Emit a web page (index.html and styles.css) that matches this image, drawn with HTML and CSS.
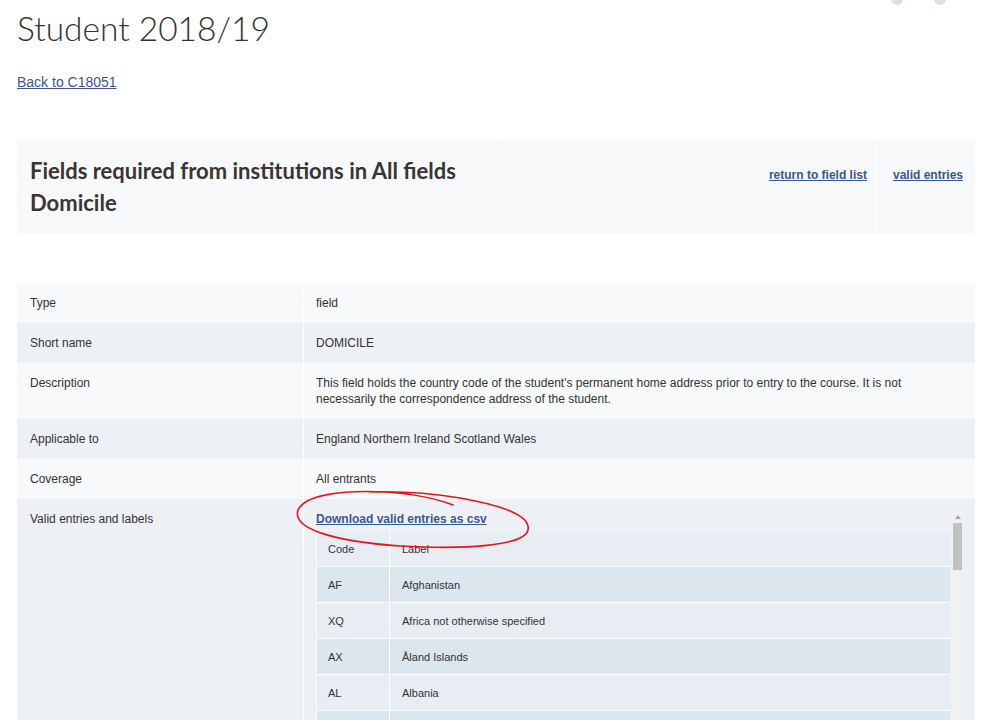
FILE: index.html
```html
<!DOCTYPE html>
<html lang="en">
<head>
<meta charset="utf-8">
<title>Student 2018/19 - Domicile</title>
<link rel="stylesheet" href="styles.css">
</head>
<body>
<div class="dots"><span class="dot"></span><span class="dot"></span></div>
<main class="page">
  <h1 class="title">Student 2018/19</h1>
  <p class="back"><a href="#">Back to C18051</a></p>

  <div class="head-box">
    <div class="head-main">
      <h2>Fields required from institutions in All fields<br>Domicile</h2>
    </div>
    <div class="head-link head-link-right"><a href="#">return to field list</a></div>
    <div class="head-link"><a href="#">valid entries</a></div>
  </div>

  <div class="details">
    <div class="row odd"><div class="k">Type</div><div class="v">field</div></div>
    <div class="row even"><div class="k">Short name</div><div class="v">DOMICILE</div></div>
    <div class="row odd"><div class="k">Description</div><div class="v">This field holds the country code of the student's permanent home address prior to entry to the course. It is not necessarily the correspondence address of the student.</div></div>
    <div class="row even"><div class="k">Applicable to</div><div class="v">England Northern Ireland Scotland Wales</div></div>
    <div class="row odd"><div class="k">Coverage</div><div class="v">All entrants</div></div>
    <div class="row even last"><div class="k">Valid entries and labels</div>
      <div class="v vscroll">
        <div class="scroll-content">
          <a class="csv" href="#">Download valid entries as csv</a>
          <div class="codes">
            <div class="crow hdr"><div class="c1">Code</div><div class="c2">Label</div></div>
            <div class="crow b"><div class="c1">AF</div><div class="c2">Afghanistan</div></div>
            <div class="crow a"><div class="c1">XQ</div><div class="c2">Africa not otherwise specified</div></div>
            <div class="crow b"><div class="c1">AX</div><div class="c2">Åland Islands</div></div>
            <div class="crow a"><div class="c1">AL</div><div class="c2">Albania</div></div>
            <div class="crow b"><div class="c1"></div><div class="c2"></div></div>
          </div>
        </div>
        <div class="sbar"><div class="sarrow"></div><div class="sthumb"></div></div>
      </div>
    </div>
  </div>
</main>
<svg class="scribble" width="998" height="720" viewBox="0 0 998 720">
  <path d="M 453 505 C 435 498, 415 494, 385 492 C 340 490, 305 495, 298 510 C 292 528, 330 541, 400 546 C 470 550, 525 545, 528 530 C 531 515, 500 505, 460 498 C 430 493, 400 491, 370 492" fill="none" stroke="#e4161d" stroke-width="1.6" stroke-linecap="round"/>
</svg>
</body>
</html>
```

FILE: styles.css
```css
html, body { margin: 0; padding: 0; background: #fff; }
body {
  font-family: "Liberation Sans", Arial, sans-serif;
  color: #333;
  height: 720px;
  overflow: hidden;
  position: relative;
}
a { color: #3a5795; }

.dots { position: absolute; top: -7px; left: 891px; display: flex; gap: 31px; }
.dot { width: 12px; height: 12px; border-radius: 50%; background: #e3dfdd; display: block; }

.page { padding: 0 23px 0 17px; }

.title {
  font-family: Lato, "Open Sans", sans-serif;
  font-weight: 300;
  font-size: 33.5px;
  line-height: 44px;
  color: #333;
  margin: 6px 0 0 0;
}

.back { margin: 23px 0 0 0; font-size: 14px; line-height: 18px; }

.head-box {
  margin-top: 49px;
  display: flex;
  background: #f8f9fb;
  height: 94px;
}
.head-main { width: 481px; padding: 15px 13px; box-sizing: border-box; border-right: 1px solid #f2f4f7; }
.head-main h2 {
  margin: 0;
  font-family: Lato, "Open Sans", sans-serif;
  font-weight: 700;
  font-size: 22px;
  line-height: 32px;
  color: #3a3434;
}
.head-link {
  padding: 27px 12px 0 13px;
  font-size: 12px;
  line-height: 16px;
  font-weight: bold;
}
.head-link-right { flex: 1; text-align: right; border-right: 1px solid #f2f4f7; }

.details { margin-top: 49px; font-size: 12px; line-height: 16px; }
.row { display: flex; }
.row.odd { background: #f8f9fb; }
.row.even { background: #edf1f5; }
.k { width: 287px; padding: 12px 13px; box-sizing: border-box; border-right: 1px solid #fff; flex: none; }
.v { flex: 1; padding: 12px 12px 12px 12px; }
.row.last { height: 240px; }

.vscroll { display: flex; padding-bottom: 0; padding-right: 12px; overflow: hidden; }
.scroll-content { flex: 1; min-width: 0; }
.csv { font-weight: bold; display: block; line-height: 16px; }
.codes { margin-top: 3px; margin-right: 2px; font-size: 11px; border-left: 1px solid #fff; }
.crow { display: flex; height: 35px; border-top: 1px solid #fff; align-items: center; }
.crow.hdr { border-top: 1px solid #f3f5f8; }
.crow.a, .crow.hdr { background: #e8edf4; }
.crow.b { background: #dce6ef; }
.c1 { width: 73px; padding-left: 11px; box-sizing: border-box; border-right: 1px solid #fff; height: 100%; display: flex; align-items: center; }
.c2 { flex: 1; padding-left: 12px; }

.sbar { width: 11px; background: #f1f1f1; flex: none; display: flex; flex-direction: column; align-items: center; }
.sarrow { width: 0; height: 0; border-left: 3px solid transparent; border-right: 3px solid transparent; border-bottom: 4px solid #a3a3a3; margin-top: 4px; }
.sthumb { width: 9px; height: 47px; background: #c1c1c1; margin-top: 4px; }

.scribble { position: absolute; left: 0; top: 0; pointer-events: none; }
```
